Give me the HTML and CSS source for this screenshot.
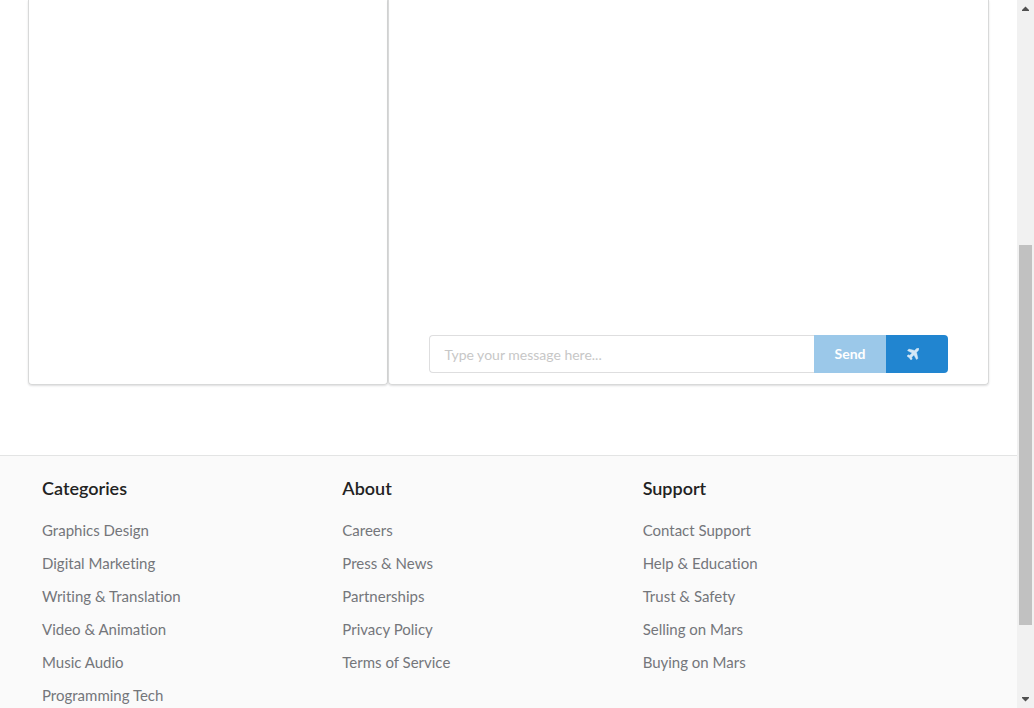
FILE: index.html
```
<!DOCTYPE html>
<html lang="en">
<head>
<meta charset="utf-8">
<meta name="viewport" content="width=device-width, initial-scale=1">
<title>Messages</title>
<link rel="stylesheet" href="styles.css">
</head>
<body>
<div class="window">
  <div class="page">
    <main class="chat">
      <section class="panel contacts" aria-label="Conversations"></section>
      <section class="panel thread" aria-label="Messages">
        <form class="composer">
          <input class="message" type="text" placeholder="Type your message here..." aria-label="Message">
          <button class="send" type="button">Send</button>
          <button class="quick" type="button" aria-label="Send message">
            <svg class="plane" viewBox="0 128 1408 1408" aria-hidden="true"><path d="M1376 160q44 52 12 148t-108 172l-161 161 160 696q5 19-12 33l-128 96q-7 6-19 6-4 0-7-1-15-3-21-16l-279-508-259 259 53 194q5 17-8 31l-96 96q-9 9-23 9h-2q-15-2-24-13l-189-252-252-189q-11-7-13-23-1-13 9-25l96-97q9-9 23-9 6 0 8 1l194 53 259-259-508-279q-14-8-17-24-2-16 9-27l128-128q14-13 30-8l665 159 160-160q76-76 172-108t148 12z"/></svg>
          </button>
        </form>
      </section>
    </main>
    <footer class="footer">
      <nav class="column">
        <h2 class="title">Categories</h2>
        <a class="link" href="#">Graphics Design</a>
        <a class="link" href="#">Digital Marketing</a>
        <a class="link" href="#">Writing &amp; Translation</a>
        <a class="link" href="#">Video &amp; Animation</a>
        <a class="link" href="#">Music Audio</a>
        <a class="link" href="#">Programming Tech</a>
      </nav>
      <nav class="column">
        <h2 class="title">About</h2>
        <a class="link" href="#">Careers</a>
        <a class="link" href="#">Press &amp; News</a>
        <a class="link" href="#">Partnerships</a>
        <a class="link" href="#">Privacy Policy</a>
        <a class="link" href="#">Terms of Service</a>
      </nav>
      <nav class="column">
        <h2 class="title">Support</h2>
        <a class="link" href="#">Contact Support</a>
        <a class="link" href="#">Help &amp; Education</a>
        <a class="link" href="#">Trust &amp; Safety</a>
        <a class="link" href="#">Selling on Mars</a>
        <a class="link" href="#">Buying on Mars</a>
      </nav>
    </footer>
  </div>
  <div class="scrollbar" aria-hidden="true">
    <svg class="arrow" viewBox="0 0 17 17"><path d="M5 11h7v-1L8.500 6.500 5 10z"/></svg>
    <div class="track"><div class="thumb"></div></div>
    <svg class="arrow" viewBox="0 0 17 17"><path d="M5 6h7v1L8.500 10.500 5 7z"/></svg>
  </div>
</div>
</body>
</html>
```
FILE: styles.css
```
* {
  box-sizing: border-box;
}

body {
  margin: 0;
  background: #fff;
  color: #222;
  font-family: Lato, "Open Sans", sans-serif;
  font-size: 14px;
  font-variant-ligatures: none;
}

.window {
  display: flex;
  height: 100vh;
  overflow: hidden;
}

.page {
  display: flex;
  flex: 1;
  flex-direction: column;
  min-width: 0;
  overflow: hidden;
}

.chat {
  display: grid;
  flex: none;
  grid-template-columns: 3fr 5fr;
  padding: 0 28px 70px;
}

.panel {
  border: 1px solid #d8d9d9;
  border-top: 0;
  border-radius: 0 0 4px 4px;
  box-shadow: 0 1px 2px rgba(34, 36, 38, 0.15);
}

.thread {
  padding: 335px 40px 11px;
}

.composer {
  display: flex;
  height: 38px;
  margin: 0;
}

.message {
  flex: 1;
  min-width: 0;
  padding: 0 14px;
  border: 1px solid #dededf;
  border-right: 0;
  border-radius: 4px 0 0 4px;
  background: #fff;
  color: #222;
  font: inherit;
  outline: 0;
}

.message::placeholder {
  color: #c7c7c7;
  opacity: 1;
}

.send,
.quick {
  padding: 0;
  border: 0;
  color: #fff;
  font: inherit;
  font-weight: 700;
}

.send {
  width: 72px;
  padding-bottom: 2px;
  background: #9bc8e9;
}

.quick {
  display: flex;
  align-items: center;
  width: 62px;
  padding-left: 21px;
  border-radius: 0 4px 4px 0;
  background: #2185d0;
}

.plane {
  width: 12px;
  height: 12px;
  fill: #d3e7f6;
  stroke: #d3e7f6;
  stroke-width: 50;
}

.footer {
  display: grid;
  flex: 1 0 auto;
  grid-template-columns: 5fr 5fr 5fr 1fr;
  padding: 20px 28px;
  border-top: 1px solid #e3e4e4;
  background: #fafafa;
}

.column {
  display: flex;
  flex-direction: column;
  align-items: flex-start;
  padding: 0 14px;
}

.title {
  margin: 0 0 18px;
  font-size: 18px;
  font-weight: 600;
  line-height: 24px;
}

.link {
  margin-bottom: 9px;
  color: #74767a;
  font-size: 15px;
  line-height: 24px;
  text-decoration: none;
}

.scrollbar {
  display: flex;
  flex: none;
  flex-direction: column;
  width: 17px;
  background: #f1f1f1;
}

.arrow {
  width: 17px;
  height: 17px;
  fill: #505050;
}

.track {
  display: grid;
  flex: 1;
  grid-template-rows: 228fr 380fr 66fr;
  padding: 0 2px;
}

.thumb {
  grid-row: 2;
  background: #c1c1c1;
}
```
